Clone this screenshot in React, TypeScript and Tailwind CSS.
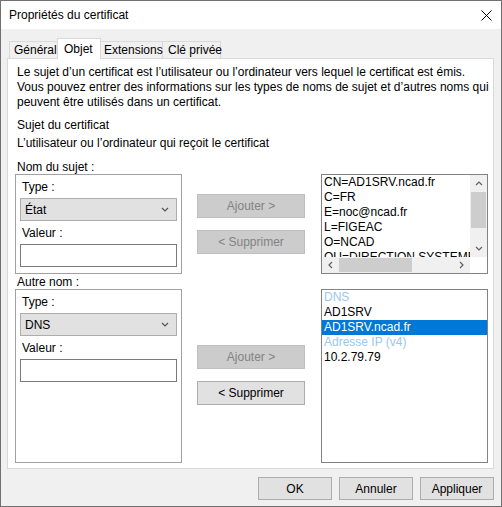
import React from "react";

const font = { fontFamily: '"Liberation Sans", Arial, sans-serif' };

function Chevron({ dir, className }: { dir: "up" | "down" | "left" | "right"; className?: string }) {
  const d =
    dir === "down"
      ? "M1 1 L4 4 L7 1"
      : dir === "up"
      ? "M1 4 L4 1 L7 4"
      : dir === "left"
      ? "M4 1 L1 4 L4 7"
      : "M1 1 L4 4 L1 7";
  const w = dir === "up" || dir === "down" ? 8 : 5;
  const h = dir === "up" || dir === "down" ? 5 : 8;
  return (
    <svg width={w} height={h} viewBox={`0 0 ${w} ${h}`} className={className}>
      <path d={d} fill="none" stroke="currentColor" strokeWidth="1.2" />
    </svg>
  );
}

function Combo({ value }: { value: string }) {
  return (
    <div className="mx-[4px] h-[23px] border border-[#adadad] bg-[#e1e1e1] flex items-center justify-between pl-[4px] pr-[7px] text-[12px] text-black">
      <span>{value}</span>
      <Chevron dir="down" className="text-[#555]" />
    </div>
  );
}

function GroupBox({ type, h }: { type: string; h: string }) {
  return (
    <div className={`w-[167px] ${h} border border-[#a0a0a0] flex flex-col pt-[5px]`}>
      <div className="pl-[6px] h-[14px] leading-[14px] text-[12px]">Type :</div>
      <div className="mt-[4px]">
        <Combo value={type} />
      </div>
      <div className="pl-[6px] mt-[5px] h-[14px] leading-[14px] text-[12px]">Valeur :</div>
      <div className="mx-[4px] mt-[4px] h-[23px] border border-[#7a7a7a] bg-white" />
    </div>
  );
}

function Btn({ label, disabled }: { label: string; disabled?: boolean }) {
  return (
    <div
      className={`w-[108px] h-[24px] flex items-center justify-center text-[12px] border ${
        disabled ? "bg-[#cccccc] border-[#bfbfbf] text-[#838383]" : "bg-[#e1e1e1] border-[#adadad] text-black"
      }`}
    >
      {label}
    </div>
  );
}

function DlgBtn({ label }: { label: string }) {
  return (
    <div className="w-[74px] h-[23px] flex items-center justify-center text-[12px] border border-[#adadad] bg-[#e1e1e1] text-black">
      {label}
    </div>
  );
}

export default function App() {
  const subjectItems = [
    "CN=AD1SRV.ncad.fr",
    "C=FR",
    "E=noc@ncad.fr",
    "L=FIGEAC",
    "O=NCAD",
    "OU=DIRECTION SYSTEME INFORMATION",
  ];
  return (
    <div
      style={font}
      className="w-[502px] h-[507px] border border-[#707070] bg-[#f0f0f0] flex flex-col text-black text-[12px] overflow-hidden"
    >
      {/* Title bar */}
      <div className="h-[28px] bg-white flex items-center justify-between pl-[8px] pr-[8px] shrink-0">
        <span className="text-[12px]">Propriétés du certificat</span>
        <svg width="11" height="11" viewBox="0 0 11 11" className="mr-[1px]">
          <path d="M0.5 0.5 L10.5 10.5 M10.5 0.5 L0.5 10.5" stroke="#000" strokeWidth="1" fill="none" />
        </svg>
      </div>

      {/* Body */}
      <div className="flex-1 flex flex-col pl-[6px] pr-[7px] pt-[9px]">
        {/* Tabs */}
        <div className="h-[20px] flex items-end pl-[2px] shrink-0 whitespace-nowrap">
          <div className="w-[48px] h-[17px] border-t border-l border-[#d9d9d9] bg-[#f0f0f0] flex items-center pl-[4px] text-[12px]">
            Général
          </div>
          <div className="relative z-10 w-[44px] h-[21px] -mb-px border-t border-l border-r border-[#d9d9d9] bg-white flex items-start pt-[1px] pl-[6px] text-[12px]">
            Objet
          </div>
          <div className="w-[62px] h-[17px] border-t border-r border-[#d9d9d9] bg-[#f0f0f0] flex items-center pl-[3px] text-[12px]">
            Extensions
          </div>
          <div className="w-[58px] h-[17px] border-t border-r border-[#d9d9d9] bg-[#f0f0f0] flex items-center pl-[5px] text-[12px]">
            Clé privée
          </div>
        </div>

        {/* Panel */}
        <div className="w-[487px] h-[411px] border border-[#d9d9d9] bg-white pl-[7px] pt-[6px] flex flex-col shrink-0">
          <div className="pl-[2px] leading-[15px] text-[12px] w-[480px]">
            <div>Le sujet d’un certificat est l’utilisateur ou l’ordinateur vers lequel le certificat est émis.</div>
            <div>Vous pouvez entrer des informations sur les types de noms de sujet et d’autres noms qui</div>
            <div>peuvent être utilisés dans un certificat.</div>
          </div>
          <div className="pl-[2px] mt-[8px] leading-[15px]">Sujet du certificat</div>
          <div className="pl-[2px] mt-[3px] leading-[15px]">L’utilisateur ou l’ordinateur qui reçoit le certificat</div>
          <div className="pl-[2px] mt-[9px] h-[14px] leading-[14px]">Nom du sujet :</div>

          {/* Row 1 */}
          <div className="flex items-start">
            <GroupBox type="État" h="h-[100px]" />
            <div className="ml-[15px] pt-[20px] flex flex-col gap-[12px]">
              <Btn label="Ajouter >" disabled />
              <Btn label="< Supprimer" disabled />
            </div>
            <div className="ml-[16px] w-[167px] h-[100px] border border-[#828282] bg-white flex flex-col">
              <div className="flex flex-1 min-h-0">
                <div className="flex-1 min-w-0 overflow-hidden pl-[2px] leading-[15px] whitespace-nowrap">
                  {subjectItems.map((t) => (
                    <div key={t}>{t}</div>
                  ))}
                </div>
                <div className="w-[17px] bg-[#f0f0f0] flex flex-col items-center">
                  <div className="h-[17px] flex items-center justify-center text-[#606060]">
                    <Chevron dir="up" />
                  </div>
                  <div className="w-[15px] h-[36px] bg-[#cdcdcd]" />
                  <div className="flex-1" />
                  <div className="h-[17px] flex items-center justify-center text-[#606060]">
                    <Chevron dir="down" />
                  </div>
                </div>
              </div>
              <div className="h-[16px] flex shrink-0">
                <div className="flex-1 bg-[#f0f0f0] flex items-center">
                  <div className="w-[17px] flex items-center justify-center text-[#606060]">
                    <Chevron dir="left" />
                  </div>
                  <div className="w-[73px] h-[14px] bg-[#cdcdcd]" />
                  <div className="flex-1" />
                  <div className="w-[17px] flex items-center justify-center text-[#606060]">
                    <Chevron dir="right" />
                  </div>
                </div>
                <div className="w-[17px] bg-white" />
              </div>
            </div>
          </div>

          <div className="pl-[2px] mt-[1px] h-[14px] leading-[14px]">Autre nom :</div>

          {/* Row 2 */}
          <div className="flex items-start">
            <GroupBox type="DNS" h="h-[174px]" />
            <div className="ml-[15px] pt-[56px] flex flex-col gap-[12px]">
              <Btn label="Ajouter >" disabled />
              <Btn label="< Supprimer" />
            </div>
            <div className="ml-[16px] w-[167px] h-[174px] border border-[#828282] bg-white leading-[15px] whitespace-nowrap">
              <div className="pl-[2px] text-[#99c8ec]">DNS</div>
              <div className="pl-[2px]">AD1SRV</div>
              <div className="pl-[2px] bg-[#0078d7] text-white">AD1SRV.ncad.fr</div>
              <div className="pl-[2px] text-[#99c8ec]">Adresse IP (v4)</div>
              <div className="pl-[2px]">10.2.79.79</div>
            </div>
          </div>
        </div>

        {/* Dialog buttons */}
        <div className="mt-[8px] flex justify-end gap-[7px]">
          <DlgBtn label="OK" />
          <DlgBtn label="Annuler" />
          <DlgBtn label="Appliquer" />
        </div>
      </div>
    </div>
  );
}
